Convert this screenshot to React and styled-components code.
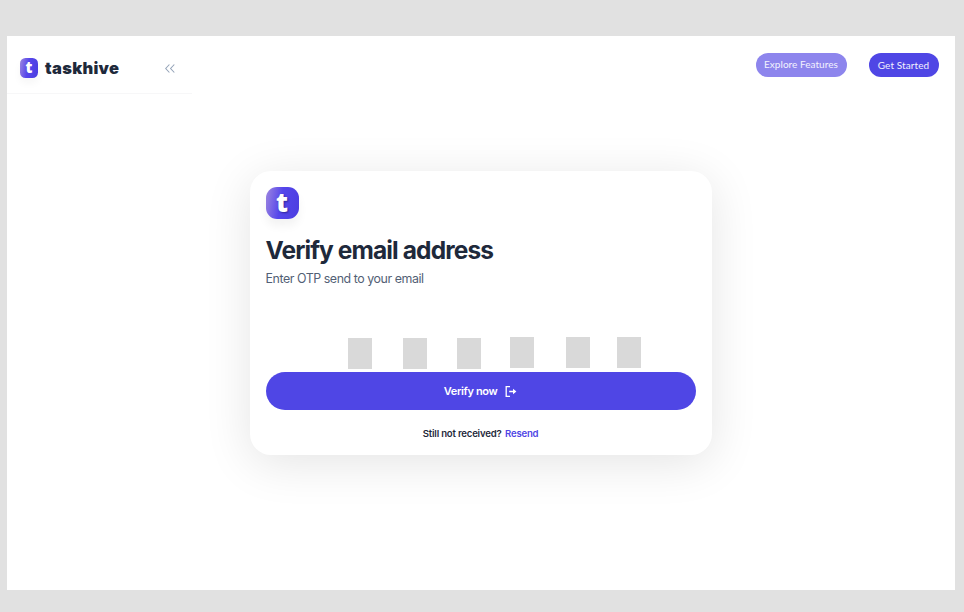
import React from "react";
import styled, { createGlobalStyle } from "styled-components";

const GlobalStyle = createGlobalStyle`
  * { box-sizing: border-box; }
  body {
    margin: 0;
    background: #e1e1e1;
    font-family: Inter, "Open Sans", sans-serif;
    color: #1e293b;
  }
`;

const Page = styled.div`
  width: 964px;
  height: 612px;
  padding: 36.4px 9.4px 22.3px 6.6px;
  background: #e1e1e1;
  overflow: hidden;
`;

const Frame = styled.main`
  display: flex;
  flex-direction: column;
  align-items: center;
  height: 100%;
  background: #fff;
`;

const Header = styled.header`
  display: flex;
  justify-content: space-between;
  align-items: flex-start;
  width: 100%;
  height: 134.6px;
`;

const SidebarHead = styled.div`
  display: flex;
  align-items: center;
  width: 185.5px;
  height: 57.6px;
  padding: 6.5px 17.5px 0 13px;
  border-bottom: 1px solid #f7f7f8;
`;

const Badge = styled.span`
  display: flex;
  align-items: center;
  justify-content: center;
  flex: none;
  width: ${({ $large }) => ($large ? "33px" : "18.5px")};
  height: ${({ $large }) => ($large ? "32px" : "19.5px")};
  border-radius: ${({ $large }) => ($large ? "11px" : "5.5px")};
  background: linear-gradient(100deg, #9d86df 0%, #5546eb 45%, #4b3de0 100%);
  box-shadow: ${({ $large }) =>
    $large ? "0 7px 10px rgba(0, 0, 0, 0.05)" : "0 5px 9px rgba(0, 0, 0, 0.04)"};
  color: #fff;
  font-family: "Noto Sans", sans-serif;
  font-size: ${({ $large }) => ($large ? "26px" : "15px")};
  font-weight: 900;
  line-height: 1;
  text-shadow: ${({ $large }) => ($large ? "1px 1px 2px rgba(20, 10, 90, 0.55)" : "none")};
`;

const Letter = styled.span`
  display: block;
  margin-top: ${({ $large }) => ($large ? "-2px" : "0")};
`;

const Wordmark = styled.span`
  margin-left: 7px;
  font-size: 16.5px;
  font-weight: 900;
  line-height: 20px;
  letter-spacing: 0.28px;
`;

const CollapseButton = styled.button`
  display: flex;
  margin: 1px 0 0 auto;
  padding: 0;
  border: 0;
  background: none;
  color: #94a3b8;
`;

const Actions = styled.nav`
  display: flex;
  gap: 22.3px;
  padding: 16.4px 16px 0 0;
`;

const Pill = styled.button`
  display: flex;
  align-items: center;
  justify-content: center;
  width: ${({ $soft }) => ($soft ? "91.4px" : "69.2px")};
  height: 24px;
  margin-top: ${({ $soft }) => ($soft ? "0" : "0.6px")};
  padding: 0 1px ${({ $soft }) => ($soft ? "1px" : "0")} 0;
  border: 0;
  border-radius: 12px;
  background: ${({ $soft }) => ($soft ? "#8d85ed" : "#4f46e5")};
  color: ${({ $soft }) => ($soft ? "#f3f2fe" : "#f1f0fe")};
  font: 400 10px/12px Lato, sans-serif;
  letter-spacing: ${({ $soft }) => ($soft ? "0.03px" : "0.1px")};
  white-space: nowrap;
`;

const Card = styled.section`
  display: flex;
  flex-direction: column;
  width: 462px;
  height: 284px;
  padding: 16px;
  border-radius: 21px;
  background: #fff;
  box-shadow: 0 8px 48px rgba(0, 0, 0, 0.11);
`;

const Title = styled.h1`
  margin: 16px 0 0;
  font-size: 24.5px;
  font-weight: 700;
  line-height: 30px;
  letter-spacing: -0.89px;
`;

const Subtitle = styled.p`
  margin: 6.4px 0 0;
  color: #526075;
  font-size: 12.4px;
  font-weight: 400;
  line-height: 16px;
  letter-spacing: -0.44px;
`;

const CodeRow = styled.div`
  display: grid;
  grid-template-columns: 55.6px 53.7px 53.1px 56px 50.9px 24px;
  height: 35.2px;
  flex: none;
  margin: 49.4px 0 0 82px;
`;

const CodeCell = styled.span`
  width: 24px;
  height: 31px;
  margin-top: ${({ $raised }) => ($raised ? "0.4px" : "1px")};
  background: #d9d9d9;
`;

const VerifyButton = styled.button`
  display: flex;
  align-items: center;
  justify-content: center;
  gap: 8px;
  height: 38.3px;
  flex: none;
  padding: 0.7px 0 0;
  border: 0;
  border-radius: 19.2px;
  background: #4f46e5;
  color: #fff;
  font: 600 11px/14px Inter, sans-serif;
  letter-spacing: -0.36px;
`;

const Hint = styled.p`
  display: flex;
  justify-content: center;
  gap: 3.5px;
  margin: 16.6px 0 0;
  font-size: 9.6px;
  font-weight: 600;
  line-height: 13px;
  letter-spacing: -0.2px;
`;

const ResendLink = styled.a`
  color: #4f46e5;
`;

const CollapseIcon = () => (
  <svg width="10" height="9" viewBox="0 0 10 9" fill="none" stroke="currentColor" strokeWidth="1.1">
    <path d="M4.4 .5.7 4.5l3.7 4M9.3 .5 5.6 4.5l3.7 4" />
  </svg>
);

const ExitIcon = () => (
  <svg width="12" height="11" viewBox="0 0 12 11" fill="none" stroke="currentColor" strokeWidth="1.3">
    <path d="M5 .7H1.2v9.6H5M4.2 5.5h6" />
    <path d="M8 2.7l3.4 2.8L8 8.3z" fill="currentColor" stroke="none" />
  </svg>
);

const Logo = ({ large }) => (
  <Badge $large={large}>
    <Letter $large={large}>t</Letter>
  </Badge>
);

const raisedCells = [false, false, false, true, true, true];

export default function App() {
  return (
    <Page>
      <GlobalStyle />
      <Frame>
        <Header>
          <SidebarHead>
            <Logo />
            <Wordmark>taskhive</Wordmark>
            <CollapseButton aria-label="Collapse sidebar">
              <CollapseIcon />
            </CollapseButton>
          </SidebarHead>
          <Actions>
            <Pill $soft>Explore Features</Pill>
            <Pill>Get Started</Pill>
          </Actions>
        </Header>
        <Card>
          <Logo large />
          <Title>Verify email address</Title>
          <Subtitle>Enter OTP send to your email</Subtitle>
          <CodeRow>
            {raisedCells.map((raised, i) => (
              <CodeCell key={i} $raised={raised} />
            ))}
          </CodeRow>
          <VerifyButton>
            Verify now
            <ExitIcon />
          </VerifyButton>
          <Hint>
            Still not received? <ResendLink>Resend</ResendLink>
          </Hint>
        </Card>
      </Frame>
    </Page>
  );
}
